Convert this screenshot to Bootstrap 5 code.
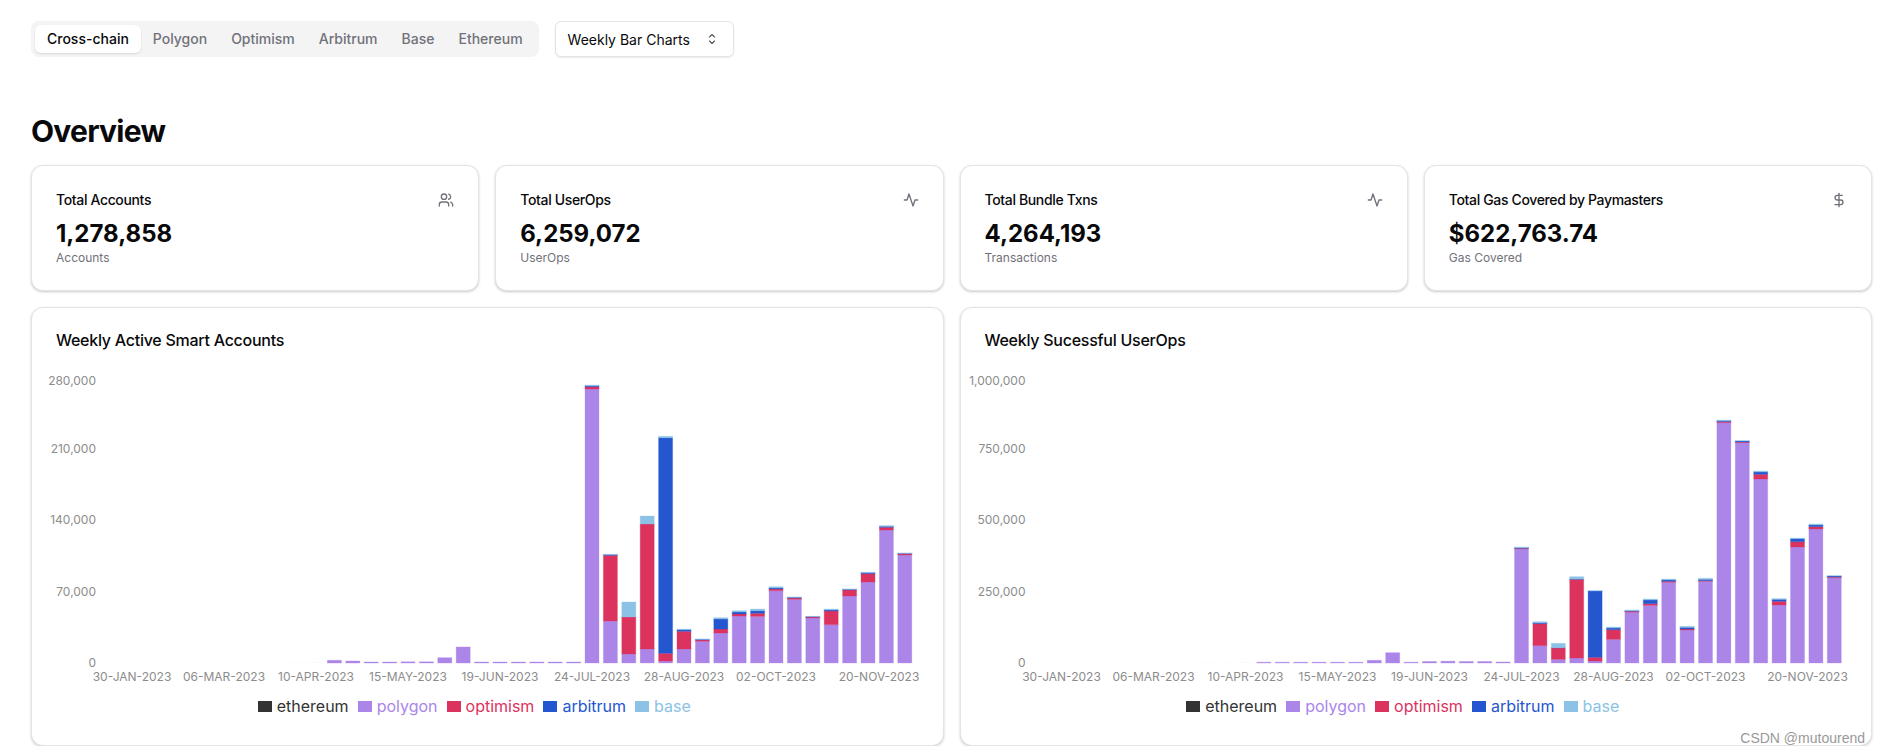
<!DOCTYPE html>
<html lang="en">
<head>
<meta charset="utf-8">
<title>Overview</title>
<link href="https://cdn.jsdelivr.net/npm/bootstrap@5.3.0/dist/css/bootstrap.min.css" rel="stylesheet">
<style>
body{font-family:Inter,"Liberation Sans",sans-serif;color:#09090b;background:#fff;font-size:14px;}
.page-wrap{padding:21px 8px 0 31px;}
.tab-strip{background:#f4f4f5;border-radius:8px;padding:4px;height:36px;gap:0;}
.tab-item{border:0;background:transparent;color:#71717a;font-size:14px;font-weight:500;line-height:20px;padding:4px 12px;border-radius:6px;}
.tab-item.is-on{background:#fff;color:#09090b;box-shadow:0 1px 2px rgba(0,0,0,.12);}
.range-select{width:179px;height:36px;margin-left:16px;border:1px solid #e4e4e7;border-radius:6px;box-shadow:0 1px 2px rgba(0,0,0,.08);background:#fff;padding:0 17px 0 12px;font-size:14px;color:#09090b;}
.page-title{font-size:30px;line-height:36px;font-weight:700;letter-spacing:-.75px;margin:56px 0 16px;color:#09090b;}
.kpi-card,.plot-card{border:1px solid #e4e4e7;border-radius:12px;box-shadow:0 1px 3px rgba(0,0,0,.16),0 1px 2px rgba(0,0,0,.06);background:#fff;}
.kpi-card{height:126px;padding:24px;}
.kpi-name{font-size:14px;line-height:20px;font-weight:500;letter-spacing:-.35px;padding-bottom:8px;margin:0;}
.kpi-num{font-size:24px;line-height:32px;font-weight:700;}
.kpi-sub{font-size:12px;line-height:16px;color:#71717a;}
.kpi-ico{width:16px;height:16px;margin-top:2px;fill:none;stroke:#71717a;stroke-width:2;stroke-linecap:round;stroke-linejoin:round;}
.plot-card{height:439px;}
.plot-name{font-size:16px;line-height:16px;font-weight:500;letter-spacing:-.26px;margin:24px 24px 12px;}
.plot-svg{display:block;width:100%;height:334px;overflow:visible;}
.plot-svg text{font-family:Inter,"Liberation Sans",sans-serif;font-size:12px;fill:#8c8c8c;}
.plot-legend{height:24px;padding-right:26px;font-size:16px;line-height:24px;gap:9px;}
.swatch{display:inline-block;width:14px;height:11px;margin-right:5px;}
.c-eth{color:#333;}.c-pol{color:#ab85e8;}.c-opt{color:#dc325e;}.c-arb{color:#2456cf;}.c-bas{color:#8bc2e6;}
.c-eth .swatch{background:#333;}.c-pol .swatch{background:#ab85e8;}.c-opt .swatch{background:#dc325e;}.c-arb .swatch{background:#2456cf;}.c-bas .swatch{background:#8bc2e6;}
.wmark{position:absolute;right:15px;top:729px;font-family:"Liberation Sans",sans-serif;font-size:14px;line-height:18px;color:#999;}
</style>
</head>
<body>
<div class="page-wrap">
  <div class="d-flex align-items-center">
    <div class="tab-strip d-inline-flex align-items-center">
      <button class="tab-item is-on" type="button">Cross-chain</button>
      <button class="tab-item" type="button">Polygon</button>
      <button class="tab-item" type="button">Optimism</button>
      <button class="tab-item" type="button">Arbitrum</button>
      <button class="tab-item" type="button">Base</button>
      <button class="tab-item" type="button">Ethereum</button>
    </div>
    <div class="range-select d-flex align-items-center justify-content-between">
      <span>Weekly Bar Charts</span>
      <svg width="8" height="12" viewBox="0 0 8 12" fill="none" stroke="#52525b" stroke-width="1.1" stroke-linecap="round" stroke-linejoin="round"><path d="M1.5 4 4 1.5 6.5 4"/><path d="M1.5 8 4 10.5 6.5 8"/></svg>
    </div>
  </div>

  <h1 class="page-title">Overview</h1>

  <div class="row g-3">
    <div class="col-3">
      <div class="kpi-card">
        <div class="d-flex justify-content-between"><p class="kpi-name">Total Accounts</p>
          <svg class="kpi-ico" viewBox="0 0 24 24"><path d="M16 21v-2a4 4 0 0 0-4-4H6a4 4 0 0 0-4 4v2"/><circle cx="9" cy="7" r="4"/><path d="M22 21v-2a4 4 0 0 0-3-3.87"/><path d="M16 3.13a4 4 0 0 1 0 7.75"/></svg></div>
        <div class="kpi-num">1,278,858</div>
        <div class="kpi-sub">Accounts</div>
      </div>
    </div>
    <div class="col-3">
      <div class="kpi-card">
        <div class="d-flex justify-content-between"><p class="kpi-name">Total UserOps</p>
          <svg class="kpi-ico" viewBox="0 0 24 24"><path d="M22 12h-4l-3 9L9 3l-3 9H2"/></svg></div>
        <div class="kpi-num">6,259,072</div>
        <div class="kpi-sub">UserOps</div>
      </div>
    </div>
    <div class="col-3">
      <div class="kpi-card">
        <div class="d-flex justify-content-between"><p class="kpi-name">Total Bundle Txns</p>
          <svg class="kpi-ico" viewBox="0 0 24 24"><path d="M22 12h-4l-3 9L9 3l-3 9H2"/></svg></div>
        <div class="kpi-num">4,264,193</div>
        <div class="kpi-sub">Transactions</div>
      </div>
    </div>
    <div class="col-3">
      <div class="kpi-card">
        <div class="d-flex justify-content-between"><p class="kpi-name">Total Gas Covered by Paymasters</p>
          <svg class="kpi-ico" viewBox="0 0 24 24"><line x1="12" x2="12" y1="2" y2="22"/><path d="M17 5H9.5a3.5 3.5 0 0 0 0 7h5a3.5 3.5 0 0 1 0 7H6"/></svg></div>
        <div class="kpi-num">$622,763.74</div>
        <div class="kpi-sub">Gas Covered</div>
      </div>
    </div>

    <div class="col-6">
      <div class="plot-card">
        <div class="plot-name">Weekly Active Smart Accounts</div>
        <svg class="plot-svg"><g transform="translate(-32 -360)">
          <g id="bars-a"></g>
          <g text-anchor="end">
            <text x="96" y="384.5">280,000</text><text x="96" y="452.5">210,000</text><text x="96" y="523.5">140,000</text><text x="96" y="595.5">70,000</text><text x="96" y="666.5">0</text>
          </g>
          <g text-anchor="middle">
            <text x="132" y="680.5">30-JAN-2023</text><text x="224" y="680.5">06-MAR-2023</text><text x="316" y="680.5">10-APR-2023</text><text x="408" y="680.5">15-MAY-2023</text><text x="500" y="680.5">19-JUN-2023</text><text x="592" y="680.5">24-JUL-2023</text><text x="684" y="680.5">28-AUG-2023</text><text x="776" y="680.5">02-OCT-2023</text><text x="879" y="680.5">20-NOV-2023</text>
          </g>
        </g></svg>
        <div class="plot-legend d-flex justify-content-center">
          <span class="c-eth"><i class="swatch"></i>ethereum</span><span class="c-pol"><i class="swatch"></i>polygon</span><span class="c-opt"><i class="swatch"></i>optimism</span><span class="c-arb"><i class="swatch"></i>arbitrum</span><span class="c-bas"><i class="swatch"></i>base</span>
        </div>
      </div>
    </div>
    <div class="col-6">
      <div class="plot-card">
        <div class="plot-name">Weekly Sucessful UserOps</div>
        <svg class="plot-svg"><g transform="translate(-960.5 -360)">
          <g id="bars-b"></g>
          <g text-anchor="end">
            <text x="1025" y="384.5">1,000,000</text><text x="1025" y="452.5">750,000</text><text x="1025" y="523.5">500,000</text><text x="1025" y="595.5">250,000</text><text x="1025" y="666.5">0</text>
          </g>
          <g text-anchor="middle">
            <text x="1061" y="680.5">30-JAN-2023</text><text x="1153" y="680.5">06-MAR-2023</text><text x="1245" y="680.5">10-APR-2023</text><text x="1337" y="680.5">15-MAY-2023</text><text x="1429" y="680.5">19-JUN-2023</text><text x="1521" y="680.5">24-JUL-2023</text><text x="1613" y="680.5">28-AUG-2023</text><text x="1705" y="680.5">02-OCT-2023</text><text x="1807" y="680.5">20-NOV-2023</text>
          </g>
        </g></svg>
        <div class="plot-legend d-flex justify-content-center">
          <span class="c-eth"><i class="swatch"></i>ethereum</span><span class="c-pol"><i class="swatch"></i>polygon</span><span class="c-opt"><i class="swatch"></i>optimism</span><span class="c-arb"><i class="swatch"></i>arbitrum</span><span class="c-bas"><i class="swatch"></i>base</span>
        </div>
      </div>
    </div>
  </div>
</div>
<div class="wmark">CSDN @mutourend</div>

<script src="https://cdn.jsdelivr.net/npm/bootstrap@5.3.0/dist/js/bootstrap.bundle.min.js"></script>
<script>
var COL=['#ab85e8','#dc325e','#2456cf','#8bc2e6'];
var BASE=663,W=14;
function draw(id,x0,small,big,baseZoom){
  var g=document.getElementById(id),ns='http://www.w3.org/2000/svg';
  function rect(x,y,h,c,so,fo){
    var r=document.createElementNS(ns,'rect');
    r.setAttribute('x',x-W/2);r.setAttribute('y',y);r.setAttribute('width',W);r.setAttribute('height',Math.max(h,.2));
    r.setAttribute('fill',c);r.setAttribute('fill-opacity',fo);r.setAttribute('stroke',c);r.setAttribute('stroke-opacity',so);r.setAttribute('stroke-width','1');
    g.appendChild(r);
  }
  small.forEach(function(h,i){
    if(h>.45) rect(x0+i*18.4,BASE-h,h,COL[0],.35,1);
    else if(h>0) rect(x0+i*18.4,BASE-.6,.6,COL[0],0,h*.25);
  });
  big.forEach(function(b,n){
    var x=x0+(25+n)*18.4,bot=BASE;
    b.forEach(function(t,k){
      var top=BASE-(baseZoom-t)/3;
      if(top<bot) rect(x,top,bot-top,COL[k],.3,1);
      bot=top;
    });
  });
}
draw('bars-a',132,
 [0,0,0,0,.1,.1,.1,.2,.2,.3,.4,2.7,2,1,1,1.2,1.2,5.3,16,1,1,1,1,1,1],
 [[57,50,47,45],[753,556,554,553],[852,741,741,696],[837,462,462,438],[873,850,203,199],[837,784,779,777],[814,810,808,807],[789,777,747,743],[738,732,726,722],[739,730,722,717],[662,657,654,650],[688,684,682,681],[744,741,740,739],[764,723,720,717],[678,660,658,657],[636,611,608,607],[480,472,469,467],[555,551,550,549]],879);
draw('bars-b',1061,
 [0,0,0,0,0,.1,.2,.2,.3,.3,.4,.8,.8,.8,.8,.8,.8,2.7,10.3,.8,1.5,1.8,1.5,1.5,1],
 [[507,505,503,501],[797,731,728,725],[838,804,803,790],[834,598,597,590],[843,832,633,632],[778,749,744,741],[697,694,692,690],[676,671,660,657],[607,604,600,597],[750,747,742,739],[604,602,598,595],[128,125,122,120],[188,186,183,182],[297,283,276,273],[675,664,658,656],[501,485,476,474],[447,440,435,432],[593,591,588,587]],849);
</script>
</body>
</html>
